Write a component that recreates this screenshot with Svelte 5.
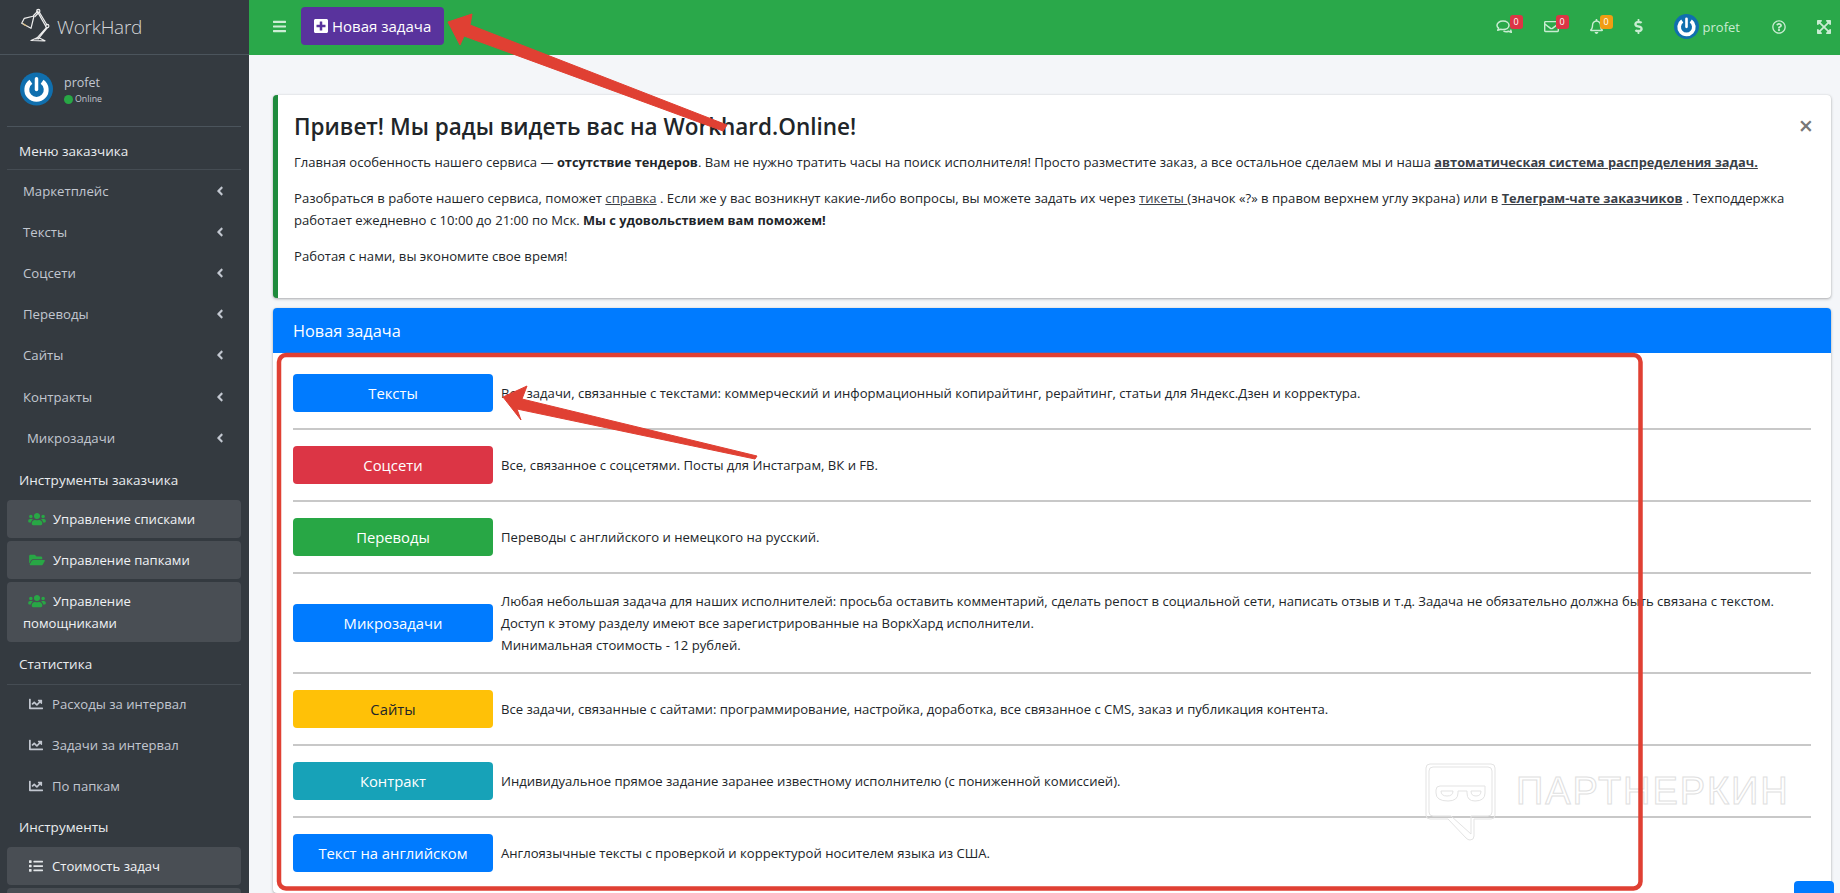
<script lang="ts">
  const icons = {
    plus: { box: '0 0 448 512', d: 'M400 32H48C21.5 32 0 53.5 0 80v352c0 26.5 21.5 48 48 48h352c26.5 0 48-21.5 48-48V80c0-26.5-21.5-48-48-48zm-32 252c0 6.6-5.4 12-12 12h-92v92c0 6.6-5.4 12-12 12h-56c-6.6 0-12-5.4-12-12v-92H92c-6.6 0-12-5.4-12-12v-56c0-6.6 5.4-12 12-12h92v-92c0-6.6 5.4-12 12-12h56c6.6 0 12 5.4 12 12v92h92c6.6 0 12 5.4 12 12v56z' },
    users: { box: '0 0 640 512', d: 'M96 224c35.3 0 64-28.7 64-64s-28.7-64-64-64-64 28.7-64 64 28.7 64 64 64zm448 0c35.3 0 64-28.7 64-64s-28.7-64-64-64-64 28.7-64 64 28.7 64 64 64zm32 32h-64c-17.6 0-33.5 7.1-45.1 18.6 40.3 22.1 68.9 62 75.1 109.4h66c17.7 0 32-14.3 32-32v-32c0-35.3-28.7-64-64-64zm-256 0c61.9 0 112-50.1 112-112S381.9 32 320 32 208 82.1 208 144s50.1 112 112 112zm76.8 32h-8.3c-20.8 10-43.9 16-68.5 16s-47.6-6-68.5-16h-8.3C179.6 288 128 339.6 128 403.2V432c0 26.5 21.5 48 48 48h288c26.5 0 48-21.5 48-48v-28.8c0-63.6-51.6-115.2-115.2-115.2zm-223.7-13.4C161.5 263.1 145.6 256 128 256H64c-35.3 0-64 28.7-64 64v32c0 17.7 14.3 32 32 32h65.9c6.3-47.4 34.9-87.3 75.2-109.4z' },
    folder: { box: '0 0 576 512', d: 'M572.694 292.093L500.27 416.248A63.997 63.997 0 0 1 444.989 448H45.025c-18.523 0-30.064-20.093-20.731-36.093l72.424-124.155A64 64 0 0 1 152 256h399.964c18.523 0 30.064 20.093 20.73 36.093zM152 224h328v-48c0-26.51-21.49-48-48-48H272l-64-64H48C21.49 64 0 85.49 0 112v278.046l69.077-118.418C86.214 242.25 117.989 224 152 224z' },
    chart: { box: '0 0 512 512', d: 'M496 384H64V80c0-8.84-7.16-16-16-16H16C7.16 64 0 71.16 0 80v336c0 17.67 14.33 32 32 32h464c8.84 0 16-7.16 16-16v-32c0-8.84-7.16-16-16-16zM464 96H345.94c-21.38 0-32.09 25.85-16.97 40.97l32.4 32.4L288 242.75l-73.37-73.37c-12.5-12.5-32.76-12.5-45.25 0l-68.69 68.69c-6.25 6.25-6.25 16.38 0 22.63l22.62 22.62c6.25 6.25 16.38 6.25 22.63 0L192 237.25l73.37 73.37c12.5 12.5 32.76 12.5 45.25 0l96-96 32.4 32.4c15.12 15.12 40.97 4.41 40.97-16.97V112c.01-8.84-7.15-16-15.99-16z' },
    list: { box: '0 0 512 512', d: 'M80 368H16a16 16 0 0 0-16 16v64a16 16 0 0 0 16 16h64a16 16 0 0 0 16-16v-64a16 16 0 0 0-16-16zm0-320H16A16 16 0 0 0 0 64v64a16 16 0 0 0 16 16h64a16 16 0 0 0 16-16V64a16 16 0 0 0-16-16zm0 160H16a16 16 0 0 0-16 16v64a16 16 0 0 0 16 16h64a16 16 0 0 0 16-16v-64a16 16 0 0 0-16-16zm416 176H176a16 16 0 0 0-16 16v32a16 16 0 0 0 16 16h320a16 16 0 0 0 16-16v-32a16 16 0 0 0-16-16zm0-320H176a16 16 0 0 0-16 16v32a16 16 0 0 0 16 16h320a16 16 0 0 0 16-16V80a16 16 0 0 0-16-16zm0 160H176a16 16 0 0 0-16 16v32a16 16 0 0 0 16 16h320a16 16 0 0 0 16-16v-32a16 16 0 0 0-16-16z' },
    bars: { box: '0 0 448 512', d: 'M16 132h416c8.837 0 16-7.163 16-16V76c0-8.837-7.163-16-16-16H16C7.163 60 0 67.163 0 76v40c0 8.837 7.163 16 16 16zm0 160h416c8.837 0 16-7.163 16-16v-40c0-8.837-7.163-16-16-16H16c-8.837 0-16 7.163-16 16v40c0 8.837 7.163 16 16 16zm0 160h416c8.837 0 16-7.163 16-16v-40c0-8.837-7.163-16-16-16H16c-8.837 0-16 7.163-16 16v40c0 8.837 7.163 16 16 16z' },
    angle: { box: '0 0 256 512', d: 'M31.7 239l136-136c9.4-9.4 24.6-9.4 33.9 0l22.6 22.6c9.4 9.4 9.4 24.6 0 33.9L127.9 256l96.4 96.4c9.4 9.4 9.4 24.6 0 33.9L201.7 413c-9.4 9.4-24.6 9.4-33.9 0l-136-136c-9.5-9.4-9.5-24.6-.1-34z' },
    dollar: { box: '0 0 288 512', d: 'M209.2 233.4l-108-31.6C88.7 198.2 80 186.5 80 173.5c0-16.3 13.2-29.5 29.5-29.5h66.3c12.2 0 24.2 3.7 34.2 10.5 6.1 4.1 14.3 3.1 19.5-2l34.8-34c7.1-6.9 6.1-18.4-1.8-24.5C238 74.8 207.4 64.1 176 64V16c0-8.8-7.2-16-16-16h-32c-8.8 0-16 7.2-16 16v48h-2.5C45.8 64-5.4 118.7.5 183.6c4.2 46.1 39.4 83.6 83.8 96.6l102.5 30c12.5 3.7 21.2 15.3 21.2 28.3 0 16.3-13.2 29.5-29.5 29.5h-66.3C100 368 88 364.3 78 357.5c-6.1-4.1-14.3-3.1-19.5 2l-34.8 34c-7.1 6.9-6.1 18.4 1.8 24.5 24.5 19.2 55.1 29.9 86.5 30v48c0 8.8 7.2 16 16 16h32c8.8 0 16-7.2 16-16v-48.2c46.6-.9 90.3-28.6 105.7-72.7 21.5-61.6-14.6-124.8-72.5-141.7z' },
    expand: { box: '0 0 448 512', d: 'M448 344v112a23.94 23.94 0 0 1-24 24H312c-21.39 0-32.09-25.9-17-41l36.2-36.2L224 295.6 116.77 402.9 153 439c15.09 15.1 4.39 41-17 41H24a23.94 23.94 0 0 1-24-24V344c0-21.4 25.89-32.1 41-17l36.19 36.2L184.46 256 77.18 148.7 41 185c-15.1 15.1-41 4.4-41-17V56a23.94 23.94 0 0 1 24-24h112c21.39 0 32.09 25.9 17 41l-36.2 36.2L224 216.4l107.23-107.3L295 73c-15.09-15.1-4.39-41 17-41h112a23.94 23.94 0 0 1 24 24v112c0 21.4-25.89 32.1-41 17l-36.19-36.2L263.54 256l107.28 107.3L407 327.1c15.1-15.2 41-4.5 41 16.9z' },
    question: { box: '0 0 512 512', d: 'M256 8C119.043 8 8 119.083 8 256c0 136.997 111.043 248 248 248s248-111.003 248-248C504 119.083 392.957 8 256 8zm0 448c-110.532 0-200-89.431-200-200 0-110.495 89.472-200 200-200 110.491 0 200 89.471 200 200 0 110.53-89.431 200-200 200zm107.244-255.2c0 67.052-72.421 68.084-72.421 92.863V300c0 6.627-5.373 12-12 12h-45.647c-6.627 0-12-5.373-12-12v-8.659c0-35.745 27.1-50.034 47.579-61.516 17.561-9.845 28.324-16.541 28.324-29.579 0-17.246-21.999-28.693-39.784-28.693-23.189 0-33.894 10.977-48.942 29.969-4.057 5.12-11.46 6.071-16.666 2.124l-27.824-21.098c-5.107-3.872-6.251-11.066-2.644-16.363C184.846 131.491 214.94 112 261.794 112c49.071 0 101.45 38.304 101.45 88.8zM298 368c0 23.159-18.841 42-42 42s-42-18.841-42-42 18.841-42 42-42 42 18.841 42 42z' },
    envelope: { box: '0 0 512 512', d: 'M464 64H48C21.49 64 0 85.49 0 112v288c0 26.51 21.49 48 48 48h416c26.51 0 48-21.49 48-48V112c0-26.51-21.49-48-48-48zm0 48v40.805c-22.422 18.259-58.168 46.651-134.587 106.49-16.841 13.247-50.201 45.072-73.413 44.701-23.208.375-56.579-31.459-73.413-44.701C106.18 199.465 70.425 171.067 48 152.805V112h416zM48 400V214.398c22.914 18.251 55.409 43.862 104.938 82.646 21.857 17.205 60.134 55.186 103.062 54.955 42.717.231 80.509-37.199 103.053-54.947 49.528-38.783 82.032-64.401 104.947-82.653V400H48z' },
    bell: { box: '0 0 448 512', d: 'M439.39 362.29c-19.32-20.76-55.47-51.99-55.47-154.29 0-77.7-54.48-139.9-127.94-155.16V32c0-17.67-14.32-32-31.98-32s-31.98 14.33-31.98 32v20.84C118.56 68.1 64.08 130.3 64.08 208c0 102.3-36.15 133.53-55.47 154.29-6 6.45-8.66 14.16-8.61 21.71.11 16.4 12.98 32 32.1 32h383.8c19.12 0 32-15.6 32.1-32 .05-7.55-2.61-15.27-8.61-21.71zM67.53 368c21.22-27.97 44.42-74.33 44.53-159.42 0-.2-.06-.38-.06-.58 0-61.86 50.14-112 112-112s112 50.14 112 112c0 .2-.06.38-.06.58.11 85.1 23.31 131.46 44.53 159.42H67.53zM224 512c35.32 0 63.97-28.65 63.97-64H160.03c0 35.35 28.65 64 63.97 64z' },
  };

  const menu = [
    { label: 'Маркетплейс' }, { label: 'Тексты' }, { label: 'Соцсети' }, { label: 'Переводы' },
    { label: 'Сайты' }, { label: 'Контракты' }, { label: 'Микрозадачи', shift: true },
  ];

  const tasks = [
    { label: 'Тексты', kind: 'blue', lines: ['Все задачи, связанные с текстами: коммерческий и информационный копирайтинг, рерайтинг, статьи для Яндекс.Дзен и корректура.'] },
    { label: 'Соцсети', kind: 'red', lines: ['Все, связанное с соцсетями. Посты для Инстаграм, ВК и FB.'] },
    { label: 'Переводы', kind: 'green', lines: ['Переводы с английского и немецкого на русский.'] },
    { label: 'Микрозадачи', kind: 'blue', lines: ['Любая небольшая задача для наших исполнителей: просьба оставить комментарий, сделать репост в социальной сети, написать отзыв и т.д. Задача не обязательно должна быть связана с текстом.', 'Доступ к этому разделу имеют все зарегистрированные на ВоркХард исполнители.', 'Минимальная стоимость - 12 рублей.'] },
    { label: 'Сайты', kind: 'yellow', lines: ['Все задачи, связанные с сайтами: программирование, настройка, доработка, все связанное с CMS, заказ и публикация контента.'] },
    { label: 'Контракт', kind: 'teal', lines: ['Индивидуальное прямое задание заранее известному исполнителю (с пониженной комиссией).'] },
    { label: 'Текст на английском', kind: 'blue', lines: ['Англоязычные тексты с проверкой и корректурой носителем языка из США.'] },
  ];
</script>

{#snippet icon(name, cls)}
  <svg class="ic {cls}" viewBox={icons[name].box} aria-hidden="true"><path d={icons[name].d} fill="currentColor" /></svg>
{/snippet}

{#snippet avatar(cls)}
  <svg class={cls} viewBox="0 0 34 34" aria-hidden="true">
    <circle cx="17" cy="17" r="17" fill="#106fae" />
    <path d="M11.2 9.6a10 10 0 1 0 11.6 0" fill="none" stroke="#fff" stroke-width="5" />
    <path d="M17 6.5v11" stroke="#fff" stroke-width="3.6" stroke-linecap="round" />
  </svg>
{/snippet}

<div class="app">
  <aside class="sidebar">
    <div class="brand">
      <svg class="lamp" viewBox="20 8 30 36" aria-hidden="true">
        <g fill="none" stroke="#eee" stroke-width="1.2" stroke-linejoin="round" stroke-linecap="round">
          <path d="M21.7 23.3 L24.3 18.3 L34 16 L31 28.3 Z" />
          <path d="M22.5 22.5 L28 26.6 L23.8 25.2 Z" fill="#d8b878" stroke="none" />
          <path d="M33.5 15.5 L38 11 M35 16.5 L38.8 12.5" />
          <circle cx="38.3" cy="11" r="1.6" />
          <path d="M39.2 12 L47 25 M38 12.6 L45.6 26" />
          <circle cx="47.3" cy="26" r="1.6" />
          <path d="M46.4 27.6 L36 39.2 M47.4 27.6 L38 39.2" />
          <path d="M31 40.5 L36 38.2 H40 L45 40.8 Z" />
        </g>
      </svg>
      <span class="brand-name">WorkHard</span>
    </div>

    <div class="user">
      {@render avatar('user-pic')}
      <div class="user-info">
        <div class="user-name">profet</div>
        <div class="user-state"><i class="dot"></i>Online</div>
      </div>
    </div>

    <nav class="nav">
      <div class="nav-head first">Меню заказчика</div>
      {#each menu as m}
        <div class="nav-item" class:shift={m.shift}>
          <span>{m.label}</span>
          {@render icon('angle', 'chev')}
        </div>
      {/each}

      <div class="nav-head plain">Инструменты заказчика</div>
      <div class="nav-box">{@render icon('users', 'g-users')}Управление списками</div>
      <div class="nav-box">{@render icon('folder', 'g-folder')}Управление папками</div>
      <div class="nav-box">{@render icon('users', 'g-users')}Управление помощниками</div>

      <div class="nav-head stat">Статистика</div>
      <div class="nav-link">{@render icon('chart', 'g-chart')}Расходы за интервал</div>
      <div class="nav-link">{@render icon('chart', 'g-chart')}Задачи за интервал</div>
      <div class="nav-link">{@render icon('chart', 'g-chart')}По папкам</div>

      <div class="nav-head tools">Инструменты</div>
      <div class="nav-box">{@render icon('list', 'g-chart')}Стоимость задач</div>
      <div class="nav-box">&nbsp;</div>
    </nav>
  </aside>

  <div class="main">
    <header class="topbar">
      {@render icon('bars', 'burger')}
      <button class="new-task">{@render icon('plus', 'plus')}Новая задача</button>

      <div class="top-right">
        <div class="tool">
          <svg class="ic t-comments" viewBox="0 0 16 13" aria-hidden="true">
            <g fill="none" stroke="currentColor" stroke-width="1.5" stroke-linejoin="round">
              <path d="M7 1 C3.4 1 1 3 1 5.3 C1 6.6 1.7 7.5 2.6 8.2 L1.7 10.2 L4.8 9.3 C5.4 9.5 6.2 9.6 7 9.6 C10.6 9.6 13 7.7 13 5.3 C13 3 10.6 1 7 1 Z" />
              <path d="M7.5 11 C9 11.8 11 11.8 12.6 11.2 L15.4 12.4 L14.6 9.6" />
            </g>
          </svg>
          <b class="badge red b1">0</b>
        </div>
        <div class="tool">{@render icon('envelope', 't-env')}<b class="badge red b2">0</b></div>
        <div class="tool">{@render icon('bell', 't-bell')}<b class="badge orange b3">0</b></div>
        {@render icon('dollar', 't-dollar')}
        <div class="top-user">{@render avatar('top-pic')}<span>profet</span></div>
        {@render icon('question', 't-q')}
        {@render icon('expand', 't-x')}
      </div>
    </header>

    <main class="content">
      <section class="callout">
        <button class="close">×</button>
        <h5>Привет! Мы рады видеть вас на Workhard.Online!</h5>
        <p>Главная особенность нашего сервиса — <b>отсутствие тендеров</b>. Вам не нужно тратить часы на поиск исполнителя! Просто разместите заказ, а все остальное сделаем мы и наша <a href="#top"><b>автоматическая система распределения задач.</b></a></p>
        <p>Разобраться в работе нашего сервиса, поможет <a href="#top">справка</a> . Если же у вас возникнут какие-либо вопросы, вы можете задать их через <a href="#top">тикеты&nbsp;</a>(значок «?» в правом верхнем углу экрана) или в <a href="#top"><b>Телеграм-чате заказчиков</b></a> . Техподдержка работает ежедневно с 10:00 до 21:00 по Мск. <b>Мы с удовольствием вам поможем!</b></p>
        <p>Работая с нами, вы экономите свое время!</p>
      </section>

      <section class="card">
        <div class="card-head">Новая задача</div>
        <div class="card-body">
          {#each tasks as t, i}
            {#if i > 0}<hr />{/if}
            <div class="task">
              <button class="btn {t.kind}">{t.label}</button>
              <div class="desc">
                {#each t.lines as line}<div>{line}</div>{/each}
              </div>
            </div>
          {/each}
        </div>
      </section>
    </main>
  </div>

  <div class="to-top"></div>

  <!-- watermark, lies over the page -->
  <div class="watermark">
    <svg viewBox="0 0 71 78" aria-hidden="true">
      <g fill="none" stroke="#e3e3e3" stroke-width="1">
        <path d="M5 1 H66 Q70 1 70 5 V52 Q70 56 66 56 H49 V73 Q49 77 45 77 Q43 77 41 75 L23 56 H5 Q1 56 1 52 V5 Q1 1 5 1 Z" />
        <path d="M8 4 H63 Q67 4 67 8 V49 Q67 53 63 53 H46 V71 L26 53 H8 Q4 53 4 49 V8 Q4 4 8 4 Z" />
        <path d="M15 23 H60 V30 Q60 38 50 38 Q42 38 42 30 V28 H33 V30 Q33 38 23 38 Q11 38 11 30 V27 Q11 23 15 23 Z" />
        <path d="M16 28 H28 Q28 33 22 33 Q16 33 16 28 Z M46 28 H56 Q56 33 51 33 Q46 33 46 28 Z" />
      </g>
    </svg>
    <span>ПАРТНЕРКИН</span>
  </div>

  <!-- screenshot annotations -->
  <svg class="marks" viewBox="0 0 1840 893" aria-hidden="true">
    <rect x="279" y="355" width="1361.5" height="533.5" rx="7" fill="none" stroke="#e04033" stroke-width="4.5" />
    <path d="M448 22 L472 14 L470 25 L727 125 L723 131 L464 36 L460 45 Z" fill="#e04033" stroke="#e04033" stroke-width="1" stroke-linejoin="round" />
    <path d="M503 397 L527 386 L522 399 L757 456 L755 459 L517 409 L521 420 Z" fill="#e04033" stroke="#e04033" stroke-width="1" stroke-linejoin="round" />
  </svg>
</div>

<style>
  :global(body) { margin: 0; background: #f4f6f9; }
  .app {
    position: relative;
    display: flex;
    height: 893px;
    overflow: hidden;
    font-family: "Open Sans", "Noto Sans", sans-serif;
    font-size: 13.1px;
    color: #212529;
  }
  .ic { display: block; flex: none; }

  .sidebar { width: 249px; flex: none; background: #343a40; color: #c2c7d0; }
  .brand {
    height: 55px;
    box-sizing: border-box;
    border-bottom: 1px solid #4b545c;
    display: flex;
    align-items: center;
    padding: 0 0 0 20px;
    gap: 7px;
  }
  .lamp { width: 30px; height: 36px; margin-top: -3px; flex: none; }
  .brand-name { font-size: 19px; font-weight: 300; color: #d5d7da; letter-spacing: -.25px; }

  .user {
    margin: 0 8px 0 7px;
    height: 72px;
    box-sizing: border-box;
    border-bottom: 1px solid #4b545c;
    display: flex;
    align-items: flex-start;
    padding: 17px 0 0 13px;
    gap: 11px;
  }
  .user-pic { width: 33px; height: 34px; }
  .user-name { font-size: 12.5px; line-height: 17px; margin-top: 2px; }
  .user-state { font-size: 8.8px; line-height: 17px; display: flex; align-items: center; gap: 2px; }
  .dot { width: 9px; height: 9px; border-radius: 50%; background: #28a745; }

  .nav { padding: 0 8px 0 7px; }
  .nav-head {
    box-sizing: border-box;
    padding-left: 12px;
    color: #e9ecef;
    font-size: 13.5px;
    font-weight: 500;
  }
  .nav-head.first { height: 43px; padding-top: 15px; border-bottom: 1px solid #454c53; }
  .nav-head.plain { height: 42px; padding-top: 13px; }
  .nav-head.stat { height: 40px; padding-top: 10px; border-bottom: 1px solid #454c53; }
  .nav-head.tools { height: 39px; padding-top: 10px; }
  .nav-item {
    height: 41.2px;
    display: flex;
    align-items: center;
    justify-content: space-between;
    padding: 0 17px 0 16px;
    font-size: 13.2px;
    color: #c2c7d0;
  }
  .nav-item.shift { padding-left: 20px; }
  .chev { width: 8px; height: 14px; color: #c2c7d0; }
  .nav-box {
    background: #494e54;
    border-radius: 4px;
    margin-bottom: 3px;
    padding: 8px 16px;
    line-height: 22px;
    color: #f0f2f4;
  }
  .nav-box :global(svg), .nav-link :global(svg) { display: inline-block; vertical-align: -2px; margin-right: 7px; }
  .nav-link {
    height: 41px;
    box-sizing: border-box;
    padding: 8px 16px;
    line-height: 22px;
    color: #c2c7d0;
  }
  .g-users { width: 18px; height: 14px; color: #28a745; margin-left: 5px; }
  .nav-box :global(.g-folder) { width: 16px; height: 14px; color: #28a745; margin-left: 6px; margin-right: 8px; }
  .g-chart { width: 14px; height: 14px; margin-left: 6px; margin-right: 9px !important; }
  .nav-box :global(.g-chart) { color: #e3e6e9; }

  .main { flex: 1; min-width: 0; }
  .topbar {
    height: 55px;
    background: #2aa84a;
    display: flex;
    align-items: center;
    padding-left: 24px;
  }
  .burger { width: 13px; height: 15px; color: #cdeed6; margin-bottom: 3px; }
  .new-task {
    margin: 0 0 3px 15px;
    height: 38px;
    width: 143px;
    padding: 0 0 0 13px;
    border: 0;
    border-radius: 4px;
    background: #59339d;
    color: #fff;
    font: inherit;
    font-size: 15px;
    display: flex;
    align-items: center;
    gap: 4px;
  }
  .plus { width: 14px; height: 16px; }
  .top-right {
    margin-left: auto;
    display: flex;
    align-items: center;
    color: #c9ecd2;
    padding-right: 9px;
    margin-bottom: 2px;
  }
  .tool { position: relative; height: 16px; }
  .t-comments { width: 16px; height: 13px; margin: 1px 32px 0 0; }
  .t-env { width: 15px; height: 15px; margin-right: 31px; }
  .t-bell { width: 13px; height: 15px; margin-right: 31px; }
  .t-dollar { width: 9px; height: 15px; margin-right: 31px; }
  .badge {
    position: absolute;
    top: -4px;
    width: 13px;
    height: 14px;
    border-radius: 3px;
    font-size: 9px;
    font-weight: 400;
    line-height: 13px;
    text-align: center;
    color: #fff;
  }
  .b1 { left: 14px; }
  .b2 { left: 12px; }
  .b3 { left: 10px; }
  .red { background: #dc3545; }
  .orange { background: #f09d13; }
  .top-pic { width: 25px; height: 25px; }
  .top-user { display: flex; align-items: center; gap: 4px; font-size: 13px; margin-right: 32px; }
  .t-q { width: 14px; height: 14px; margin-right: 31px; }
  .t-x { width: 14px; height: 16px; }

  .content { padding: 40px 9px 0 24px; }
  .callout {
    position: relative;
    height: 203px;
    box-sizing: border-box;
    background: #fff;
    border-left: 5px solid #1e8a3c;
    border-radius: 4px;
    box-shadow: 0 0 1px rgba(0,0,0,.125), 0 1px 3px rgba(0,0,0,.3);
    padding: 16px 16px 0 16px;
    margin-bottom: 10px;
  }
  .callout h5 { margin: 0 0 9px; font-size: 22.5px; line-height: 32px; font-weight: 600; color: #212529; }
  .callout p { margin: 0 0 14.5px; line-height: 21.8px; }
  .callout b { font-size: 12.8px; }
  .callout a { color: #3a4047; text-decoration: underline; }
  .close {
    position: absolute;
    right: 18px;
    top: 13px;
    border: 0;
    background: none;
    padding: 0;
    font: inherit;
    font-size: 25px;
    font-weight: 600;
    line-height: 34px;
    color: #777;
  }
  .card {
    background: #fff;
    border-radius: 4px;
    box-shadow: 0 0 1px rgba(0,0,0,.125), 0 1px 3px rgba(0,0,0,.3);
  }
  .card-head {
    height: 45px;
    box-sizing: border-box;
    background: #007bff;
    color: #fff;
    border-radius: 4px 4px 0 0;
    padding: 1px 20px 0;
    font-size: 16.3px;
    line-height: 45px;
  }
  .card-body { padding: 21px 20px; }
  .task { display: flex; align-items: center; gap: 8px; }
  .desc { line-height: 22px; }
  hr { border: 0; height: 2px; background: #c8c8c8; margin: 16px 0; }
  .btn {
    width: 200px;
    height: 38px;
    flex: none;
    border: 0;
    border-radius: 4px;
    color: #fff;
    font: inherit;
    font-size: 14.8px;
  }
  .btn.blue { background: #007bff; }
  .btn.red { background: #dc3545; }
  .btn.green { background: #28a745; }
  .btn.yellow { background: #ffc107; color: #212529; }
  .btn.teal { background: #17a2b8; }

  .to-top {
    position: absolute;
    left: 1794px;
    top: 881px;
    width: 40px;
    height: 38px;
    background: #007bff;
    border-radius: 4px;
  }
  .watermark {
    position: absolute;
    left: 1425px;
    top: 763px;
    display: flex;
    gap: 20px;
    pointer-events: none;
  }
  .watermark svg { width: 71px; height: 78px; }
  .watermark span {
    margin-top: 6px;
    font-family: "Liberation Sans", sans-serif;
    font-size: 38px;
    line-height: 44px;
    letter-spacing: 1.9px;
    color: transparent;
    -webkit-text-stroke: 1px #e0e0e0;
  }
  .marks { position: absolute; left: 0; top: 0; width: 1840px; height: 893px; pointer-events: none; }
</style>
